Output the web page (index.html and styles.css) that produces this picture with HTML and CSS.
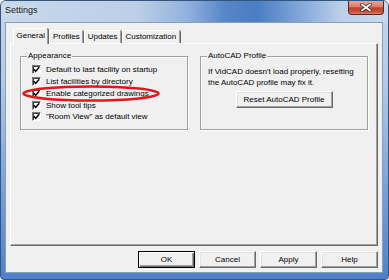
FILE: index.html
```html
<!DOCTYPE html>
<html lang="en">
<head>
  <meta charset="UTF-8">
  <title>Settings</title>
  <link rel="stylesheet" href="styles.css">
</head>
<body>
  <div class="window">
    <div class="titlebar">
      <span class="title">Settings</span>
      <span class="close">
        <svg width="12" height="9" viewBox="0 0 12 9">
          <path d="M2 1.5 L10 7.5 M10 1.5 L2 7.5" stroke="#4a2a26" stroke-width="3.4" stroke-linecap="square"/>
          <path d="M2 1.5 L10 7.5 M10 1.5 L2 7.5" stroke="#fff" stroke-width="1.8" stroke-linecap="square"/>
        </svg>
      </span>
    </div>

    <div class="client">
      <div class="tabs">
        <span class="tab active">General</span>
        <span class="tab">Profiles</span>
        <span class="tab">Updates</span>
        <span class="tab">Customization</span>
      </div>

      <div class="panel">
        <fieldset class="group">
          <legend>Appearance</legend>
          <div class="rows">
            <div class="check"><span class="box"><svg width="7" height="7" viewBox="0 0 7 7"><path d="M0.8 3.3 L2.7 5.3 L6.2 1.2" fill="none" stroke="#000" stroke-width="1.5"/></svg></span>Default to last facility on startup</div>
            <div class="check"><span class="box"><svg width="7" height="7" viewBox="0 0 7 7"><path d="M0.8 3.3 L2.7 5.3 L6.2 1.2" fill="none" stroke="#000" stroke-width="1.5"/></svg></span>List facilities by directory</div>
            <div class="check marked">
              <span class="box"><svg width="7" height="7" viewBox="0 0 7 7"><path d="M0.8 3.3 L2.7 5.3 L6.2 1.2" fill="none" stroke="#000" stroke-width="1.5"/></svg></span>Enable categorized drawings
              <svg class="ring" width="138" height="17" viewBox="0 0 138 17">
                <ellipse cx="69" cy="8.5" rx="67.5" ry="7" fill="none" stroke="#e8141b" stroke-width="2.6"/>
              </svg>
            </div>
            <div class="check"><span class="box"><svg width="7" height="7" viewBox="0 0 7 7"><path d="M0.8 3.3 L2.7 5.3 L6.2 1.2" fill="none" stroke="#000" stroke-width="1.5"/></svg></span>Show tool tips</div>
            <div class="check"><span class="box"><svg width="7" height="7" viewBox="0 0 7 7"><path d="M0.8 3.3 L2.7 5.3 L6.2 1.2" fill="none" stroke="#000" stroke-width="1.5"/></svg></span>"Room View" as default view</div>
          </div>
        </fieldset>

        <fieldset class="group">
          <legend>AutoCAD Profile</legend>
          <div class="profile">
            <p>If VidCAD doesn't load properly, resetting the AutoCAD profile may fix it.</p>
            <button class="btn reset">Reset AutoCAD Profile</button>
          </div>
        </fieldset>
      </div>

      <div class="actions">
        <button class="btn default">OK</button>
        <button class="btn">Cancel</button>
        <button class="btn">Apply</button>
        <button class="btn">Help</button>
      </div>
    </div>
  </div>
</body>
</html>
```

FILE: styles.css
```css
* {
  box-sizing: border-box;
}
body {
  margin: 0;
  background: #fff;
  font-family: "Liberation Sans", Arial, sans-serif;
  font-size: 8px;
  color: #000;
}
.window {
  width: 389px;
  height: 280px;
  display: flex;
  flex-direction: column;
  border: 1px solid #34567e;
  border-radius: 6px 6px 4px 4px;
  background: linear-gradient(to bottom, #c6d7eb 0%, #b2c9e6 30%, #7ea4d9 65%, #4f80c8 100%);
  overflow: hidden;
}
.titlebar {
  height: 21px;
  display: flex;
  align-items: flex-start;
  background: linear-gradient(to right, #c8d8eb 0%, #bccfe7 35%, #92b2de 48%, #5686c8 58%, #4a7dc3 66%, #86a9da 78%, #bcd0ea 88%, #c9d9ec 100%);
}
.title {
  padding: 1px 0 0 4px;
  line-height: 17px;
  font-size: 9px;
  color: #111;
  text-shadow: 0 0 5px rgba(255, 255, 255, 0.9);
}
.close {
  margin-left: auto;
  margin-right: 4px;
  width: 36px;
  height: 14px;
  display: flex;
  align-items: center;
  justify-content: center;
  border: 1px solid #5e2620;
  border-top: none;
  border-radius: 0 0 4px 4px;
  background: linear-gradient(to bottom, #e9a897 0%, #d97b6b 45%, #c1402e 52%, #cc4a34 80%, #e0806a 100%);
}

/* client area */
.client {
  flex: 1;
  margin: 0 5px 6px 4px;
  border: 1px solid #8c9eb6;
  background: #f0f0f0;
  padding: 5px 4px 4px 4px;
  display: flex;
  flex-direction: column;
}
.tabs {
  height: 15px;
  display: flex;
  align-items: flex-end;
  padding-left: 3px;
}
.tab {
  height: 13px;
  padding: 0 2.5px;
  line-height: 12px;
  border: 1px solid;
  border-color: #fff #a0a0a0 transparent #fff;
  border-bottom: none;
  border-radius: 2px 2px 0 0;
  box-shadow: 1px 0 0 #696969;
  margin-right: 1px;
}
.tab.active {
  position: relative;
  z-index: 1;
  height: 16px;
  margin-bottom: -1px;
  line-height: 14px;
  background: #f0f0f0;
}
.panel {
  height: 203px;
  border: 1px solid;
  border-color: #fff #696969 #696969 #fff;
  box-shadow: inset -1px -1px 0 #a0a0a0;
  display: flex;
  gap: 12px;
  padding: 7px 9px 0 9px;
  align-items: flex-start;
}
.group {
  margin: 0;
  padding: 0;
  min-width: 0;
  width: 168px;
  height: 79px;
  border: 1px solid #a0a0a0;
  box-shadow: inset 1px 1px 0 #fff, 1px 1px 0 #fff;
}
.group legend {
  margin-left: 6px;
  padding: 0 1px;
  line-height: 10px;
  font-size: 8px;
  background: #f0f0f0;
}
.rows {
  padding: 3px 0 0 11px;
}
.check {
  position: relative;
  height: 11.75px;
  display: flex;
  align-items: center;
  gap: 5px;
  white-space: nowrap;
}
.box {
  width: 9px;
  height: 9px;
  flex: none;
  background: #fff;
  border: 1px solid;
  border-color: #7a7a7a #fff #fff #7a7a7a;
  box-shadow: inset 1px 1px 0 #404040;
  display: flex;
  align-items: center;
  justify-content: center;
}
.box svg {
  display: block;
}
.ring {
  position: absolute;
  left: -10px;
  top: -3px;
}
.profile {
  padding: 5px 7px 0 7px;
}
.profile p {
  margin: 0;
  line-height: 11px;
}

/* buttons */
.btn {
  width: 57px;
  height: 17px;
  padding: 0;
  font: inherit;
  color: #000;
  background: #f0f0f0;
  border: 1px solid;
  border-color: #fff #696969 #696969 #fff;
  box-shadow: inset -1px -1px 0 #a0a0a0, inset 1px 1px 0 #e3e3e3;
}
.btn.default {
  border-color: #000;
  box-shadow: inset 1px 1px 0 #fff, inset -1px -1px 0 #696969, inset -2px -2px 0 #a0a0a0;
}
.btn.reset {
  display: block;
  width: 97px;
  margin: 3px auto 0;
}
.actions {
  margin-top: 5px;
  display: flex;
  justify-content: flex-end;
  gap: 4px;
}
```
